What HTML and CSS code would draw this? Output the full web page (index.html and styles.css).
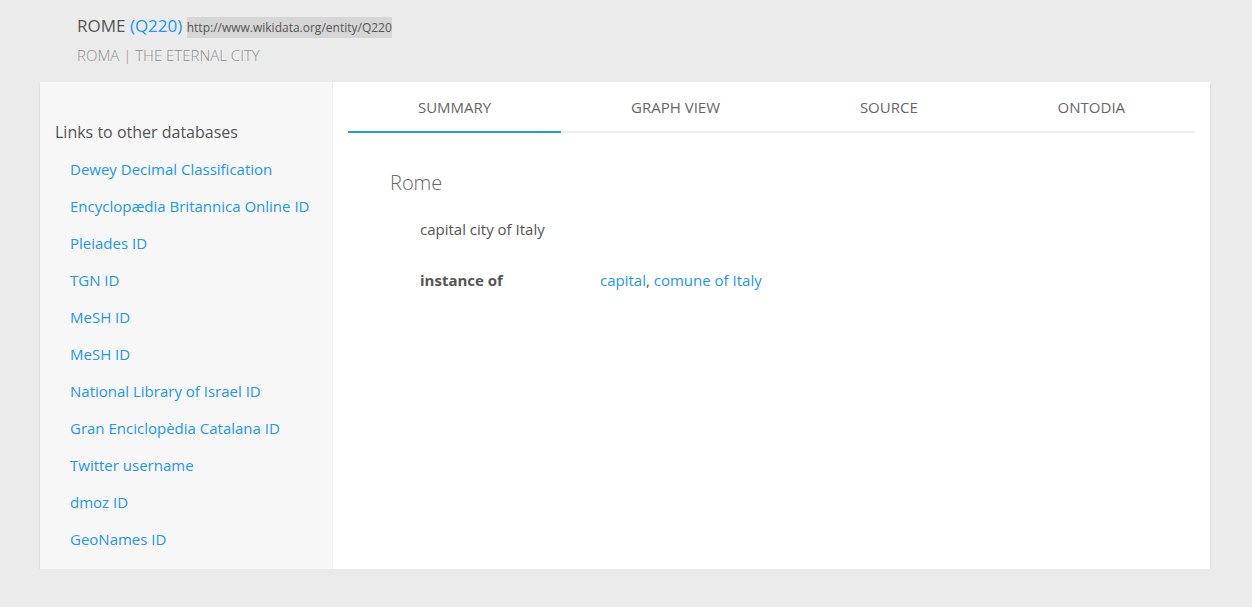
FILE: index.html
```html
<!DOCTYPE html>
<html>
<head>
<meta charset="utf-8">
<link rel="stylesheet" href="styles.css">
</head>
<body>
<header class="head">
  <div class="title"><span class="name">ROME</span> <span class="qid">(Q220)</span> <span class="uri">http://www.wikidata.org/entity/Q220</span></div>
  <div class="subtitle">ROMA | THE ETERNAL CITY</div>
</header>
<div class="card">
  <aside class="side">
    <div class="side-title">Links to other databases</div>
    <ul class="links">
      <li><a>Dewey Decimal Classification</a></li>
      <li><a>Encyclopædia Britannica Online ID</a></li>
      <li><a>Pleiades ID</a></li>
      <li><a>TGN ID</a></li>
      <li><a>MeSH ID</a></li>
      <li><a>MeSH ID</a></li>
      <li><a>National Library of Israel ID</a></li>
      <li><a>Gran Enciclopèdia Catalana ID</a></li>
      <li><a>Twitter username</a></li>
      <li><a>dmoz ID</a></li>
      <li><a>GeoNames ID</a></li>
    </ul>
  </aside>
  <main class="main">
    <nav class="tabs">
      <div class="tab active">SUMMARY</div>
      <div class="tab">GRAPH VIEW</div>
      <div class="tab">SOURCE</div>
      <div class="tab">ONTODIA</div>
    </nav>
    <section class="summary">
      <h2 class="label">Rome</h2>
      <p class="desc">capital city of Italy</p>
      <div class="prop">
        <div class="prop-name">instance of</div>
        <div class="prop-val"><a>capital</a>, <a>comune of Italy</a></div>
      </div>
    </section>
  </main>
</div>
</body>
</html>
```
FILE: styles.css
```css
html, body {
  margin: 0;
  padding: 0;
  background: #ebebeb;
  font-family: "Open Sans", "Liberation Sans", sans-serif;
  color: #555;
}
a { color: #2196f3; text-decoration: none; }

.head {
  padding: 14px 0 0 77px;
  height: 82px;
  box-sizing: border-box;
}
.title {
  font-size: 17px;
  line-height: 24px;
  color: #555;
}
.qid { color: #2196f3; }
.uri {
  font-size: 12px;
  background: #d6d6d6;
  color: #555;
  padding: 2px 0;
}
.subtitle {
  font-size: 15px;
  font-weight: 300;
  line-height: 20px;
  margin-top: 5px;
  color: #8f8f8f;
}

.card {
  margin: 0 42px 0 40px;
  display: flex;
  height: 487px;
  background: #fff;
  box-shadow: 0 1px 2px rgba(0,0,0,0.15);
}
.side {
  width: 293px;
  flex: none;
  background: #f7f7f7;
  border-right: 1px solid #eee;
  box-sizing: border-box;
  padding: 39px 0 0 15px;
}
.side-title {
  font-size: 16px;
  line-height: 22px;
  color: #555;
}
.links {
  list-style: none;
  margin: 8px 0 0 0;
  padding: 0 0 0 15px;
}
.links li {
  font-size: 15px;
  line-height: 21px;
  padding: 8px 0;
}

.main {
  flex: 1;
  padding: 0 15px 0 15px;
}
.tabs {
  display: flex;
  border-bottom: 2px solid #eee;
  height: 49px;
}
.tab {
  flex: 1 1 auto;
  text-align: center;
  font-size: 15px;
  line-height: 20px;
  padding-top: 15px;
  color: #666;
  margin-bottom: -2px;
  border-bottom: 2px solid transparent;
}
.tab.active { border-bottom-color: #2196f3; }

.summary {
  padding: 36px 0 0 42px;
}
.label {
  margin: 0;
  font-size: 20px;
  font-weight: 300;
  line-height: 28px;
  color: #666;
}
.desc {
  margin: 22px 0 0 30px;
  font-size: 15px;
  line-height: 20px;
  color: #555;
}
.prop {
  display: flex;
  margin: 31px 0 0 30px;
  font-size: 15px;
  line-height: 20px;
}
.prop-name {
  width: 180px;
  font-weight: 700;
  color: #555;
}
```
